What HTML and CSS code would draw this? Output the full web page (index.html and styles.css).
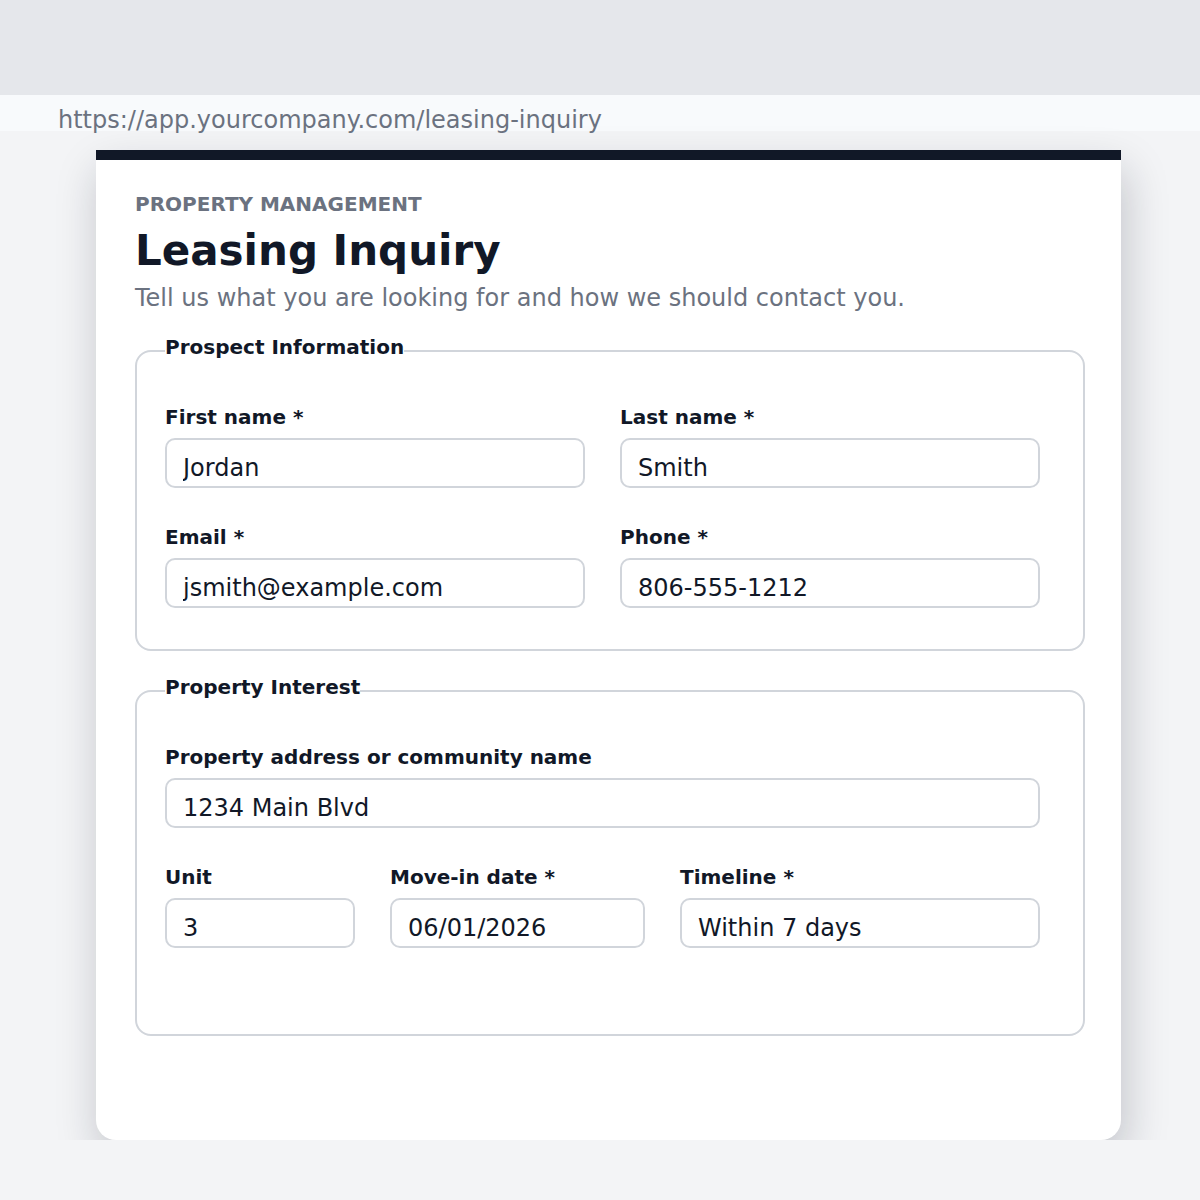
FILE: index.html
```html
<!DOCTYPE html>
<html>

	<head>
		<meta charset="UTF-8">
		<title>Leasing Inquiry</title>
		<link rel="stylesheet" href="styles.css">
	</head>

	<body>
		<div class="chrome"></div>
		<div class="urlbar">https://app.yourcompany.com/leasing-inquiry</div>

		<div class="card">
			<div class="eyebrow">Property Management</div>
			<h1 class="title">Leasing Inquiry</h1>
			<p class="lead">Tell us what you are looking for and how we should contact you.</p>

			<form>
				<fieldset class="group">
					<legend>Prospect Information</legend>
					<div class="grid two">
						<div class="field">
							<label for="first">First name *</label>
							<input id="first" type="text" value="Jordan">
						</div>
						<div class="field">
							<label for="last">Last name *</label>
							<input id="last" type="text" value="Smith">
						</div>
						<div class="field">
							<label for="email">Email *</label>
							<input id="email" type="text" value="jsmith@example.com">
						</div>
						<div class="field">
							<label for="phone">Phone *</label>
							<input id="phone" type="text" value="806-555-1212">
						</div>
					</div>
				</fieldset>

				<fieldset class="group tall">
					<legend>Property Interest</legend>
					<div class="grid one">
						<div class="field">
							<label for="address">Property address or community name</label>
							<input id="address" type="text" value="1234 Main Blvd">
						</div>
					</div>
					<div class="grid three">
						<div class="field">
							<label for="unit">Unit</label>
							<input id="unit" type="text" value="3">
						</div>
						<div class="field">
							<label for="movein">Move-in date *</label>
							<input id="movein" type="text" value="06/01/2026">
						</div>
						<div class="field">
							<label for="timeline">Timeline *</label>
							<input id="timeline" type="text" value="Within 7 days">
						</div>
					</div>
				</fieldset>
			</form>
		</div>
	</body>

</html>
```

FILE: styles.css
```css
body {
	margin: 0;
	background: #f3f4f6;
	font-family: "DejaVu Sans", Verdana, sans-serif;
	color: #111827;
}

.chrome {
	height: 95px;
	background: #e5e7eb;
}

.urlbar {
	height: 36px;
	line-height: 50px;
	padding-left: 58px;
	background: #f8fafc;
	color: #6b7280;
	font-size: 24px;
	white-space: nowrap;
}

.card {
	width: 950px;
	margin: 19px 0 0 96px;
	padding: 33px 36px 104px 39px;
	background: #fff;
	border-top: 10px solid #111827;
	border-radius: 0 0 20px 20px;
	box-shadow: 4px 20px 44px rgba(17, 24, 39, 0.22);
}

.eyebrow {
	font-size: 20px;
	font-weight: bold;
	text-transform: uppercase;
	color: #6b7280;
	line-height: 23px;
}

.title {
	margin: 10px 0 0;
	font-size: 42px;
	line-height: 50px;
}

.lead {
	margin: 7px 0 0;
	font-size: 24px;
	line-height: 30px;
	color: #6b7280;
}

form {
	margin-top: 23px;
}

.group {
	margin: 0;
	padding: 41px 43px 41px 28px;
	border: 2px solid #d1d5db;
	border-radius: 16px;
}

.group + .group {
	margin-top: 25px;
}

.group.tall {
	padding-bottom: 86px;
}

.group legend {
	padding: 0 0 6px;
	font-size: 20px;
	font-weight: bold;
	line-height: 23px;
}

.grid {
	display: grid;
	column-gap: 35px;
	row-gap: 38px;
}

.grid + .grid {
	margin-top: 38px;
}

.two {
	grid-template-columns: 420px 420px;
}

.one {
	grid-template-columns: 875px;
}

.three {
	grid-template-columns: 190px 255px 360px;
}

.field {
	display: flex;
	flex-direction: column;
	gap: 9px;
}

.field label {
	font-size: 20px;
	font-weight: bold;
	line-height: 23px;
}

.field input {
	box-sizing: border-box;
	height: 50px;
	padding: 10px 16px 0;
	border: 2px solid #d1d5db;
	border-radius: 10px;
	font-family: inherit;
	font-size: 24px;
	color: #111827;
	background: #fff;
}
```
